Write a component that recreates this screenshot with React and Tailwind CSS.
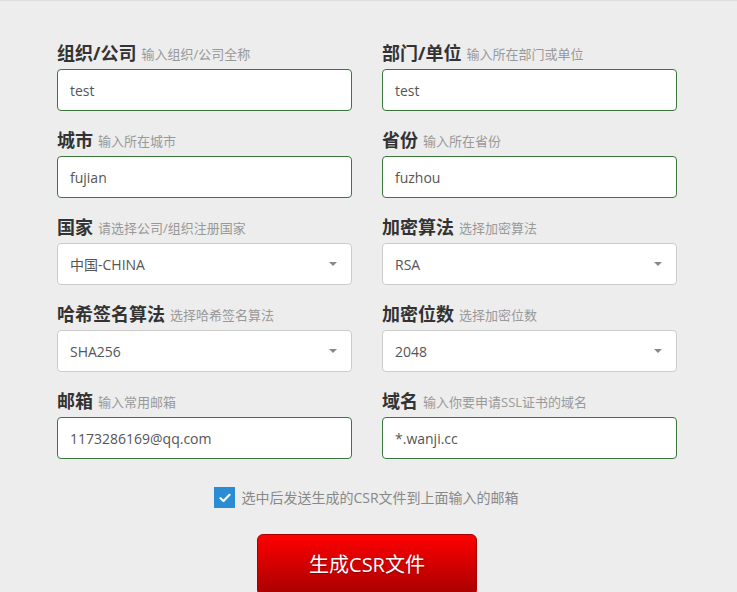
const FIELDS = [
  [
    { label: '组织/公司', hint: '输入组织/公司全称', value: 'test' },
    { label: '部门/单位', hint: '输入所在部门或单位', value: 'test' },
  ],
  [
    { label: '城市', hint: '输入所在城市', value: 'fujian' },
    { label: '省份', hint: '输入所在省份', value: 'fuzhou' },
  ],
  [
    { label: '国家', hint: '请选择公司/组织注册国家', value: '中国-CHINA', select: true },
    { label: '加密算法', hint: '选择加密算法', value: 'RSA', select: true },
  ],
  [
    { label: '哈希签名算法', hint: '选择哈希签名算法', value: 'SHA256', select: true },
    { label: '加密位数', hint: '选择加密位数', value: '2048', select: true },
  ],
  [
    { label: '邮箱', hint: '输入常用邮箱', value: '1173286169@qq.com' },
    { label: '域名', hint: '输入你要申请SSL证书的域名', value: '*.wanji.cc' },
  ],
]

function Field({ label, hint, value, select }) {
  return (
    <div className="flex flex-col">
      <div className="flex items-end h-[23px]">
        <span className="text-[18px] font-bold text-[#333] leading-none">{label}</span>
        <span className="ml-[5px] text-[13px] text-[#999] leading-none pb-[1px]">{hint}</span>
      </div>
      <div
        className={
          'mt-[7px] h-[42px] rounded-[4px] bg-white flex items-center justify-between pl-[12px] pr-[14px] text-[14px] text-[#555] ' +
          (select ? 'border border-[#ccc]' : 'border border-[#3c763d]')
        }
      >
        <span>{value}</span>
        {select && (
          <span className="w-0 h-0 border-l-[4px] border-r-[4px] border-t-[4px] border-l-transparent border-r-transparent border-t-[#888]" />
        )}
      </div>
    </div>
  )
}

export default function App() {
  return (
    <div
      className="h-[592px] bg-[#ededed] border-t border-[#dcdcdc] overflow-hidden"
      style={{ fontFamily: '"Open Sans", "Noto Sans CJK SC", sans-serif' }}
    >
      <div className="pl-[57px] w-[677px] pt-[38px]">
        <div className="flex flex-col gap-[15px]">
          {FIELDS.map((row, i) => (
            <div key={i} className="grid grid-cols-2 gap-x-[30px]">
              {row.map((f) => (
                <Field key={f.label} {...f} />
              ))}
            </div>
          ))}
        </div>

        <div className="flex items-center justify-center mt-[28px] -ml-[1px]">
          <span className="w-[21px] h-[21px] bg-[#2a8dd4] flex items-center justify-center">
            <svg width="12" height="10" viewBox="0 0 12 10" fill="none">
              <path d="M1.5 5.2 L4.5 8 L10.5 1.8" stroke="#fff" strokeWidth="2.2" strokeLinecap="round" strokeLinejoin="round" />
            </svg>
          </span>
          <span className="ml-[6px] text-[14px] text-[#888]">选中后发送生成的CSR文件到上面输入的邮箱</span>
        </div>

        <div className="flex justify-center mt-[26px]">
          <button className="w-[220px] h-[62px] shrink-0 rounded-[6px] border border-[#a00] bg-gradient-to-b from-[#ff0000] to-[#a80000] text-white text-[20px] leading-none [text-shadow:0_1px_1px_rgba(0,0,0,0.3)]">
            生成CSR文件
          </button>
        </div>
      </div>
    </div>
  )
}
